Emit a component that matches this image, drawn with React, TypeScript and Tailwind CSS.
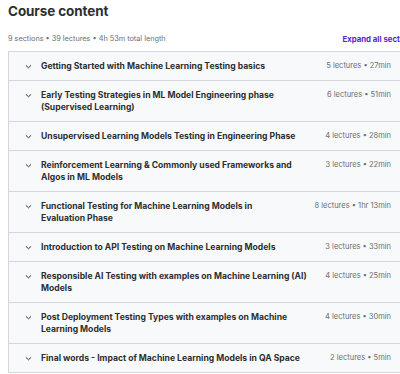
import React from "react";

// titles split where the reference wraps them
const sections = [
  { title: ["Getting Started with Machine Learning Testing basics"], meta: "5 lectures • 27min" },
  { title: ["Early Testing Strategies in ML Model Engineering phase", "(Supervised Learning)"], meta: "6 lectures • 51min" },
  { title: ["Unsupervised Learning Models Testing in Engineering Phase"], meta: "4 lectures • 28min" },
  { title: ["Reinforcement Learning & Commonly used Frameworks and", "Algos in ML Models"], meta: "3 lectures • 22min" },
  { title: ["Functional Testing for Machine Learning Models in", "Evaluation Phase"], meta: "8 lectures • 1hr 13min" },
  { title: ["Introduction to API Testing on Machine Learning Models"], meta: "3 lectures • 33min" },
  { title: ["Responsible AI Testing with examples on Machine Learning (AI)", "Models"], meta: "4 lectures • 25min" },
  { title: ["Post Deployment Testing Types with examples on Machine", "Learning Models"], meta: "4 lectures • 30min" },
  { title: ["Final words - Impact of Machine Learning Models in QA Space"], meta: "2 lectures • 5min" },
];

function Chevron() {
  return (
    <svg width="7" height="7" viewBox="0 0 7 7" className="shrink-0">
      <path d="M1.2 2.6 L3.5 4.8 L5.8 2.6" fill="none" stroke="#2d2f31" strokeWidth="1" strokeLinecap="round" strokeLinejoin="round" />
    </svg>
  );
}

export default function App() {
  return (
    <div className="w-[400px] h-[374px] overflow-hidden bg-white font-['Inter',sans-serif] text-[#2d2f31]">
      <div className="w-[410px] pl-2">
        <h2 className="text-[13.5px] font-bold leading-[16px] pt-[3px] tracking-[-0.1px]">Course content</h2>
        <div className="flex items-center justify-between mt-[15px] h-[11px]">
          <span className="text-[7.3px] text-[#6a6f73]">9 sections • 39 lectures • 4h 53m total length</span>
          <span className="text-[7.8px] font-bold text-[#5624d0] whitespace-nowrap -mr-[6px]">Expand all sections</span>
        </div>
        <div className="mt-[6px] border-l border-t border-[#d1d7dc]">
          {sections.map((s) => (
            <div
              key={s.meta + s.title[0]}
              className="flex items-start bg-[#f7f9fa] border-b border-[#d1d7dc] py-[8px] pl-[16px] pr-[19px]"
            >
              <div className="h-[12px] flex items-center">
                <Chevron />
              </div>
              <div className="ml-[9px] flex-1 min-w-0 text-[8.6px] font-bold leading-[12px]">
                {s.title.map((line) => (
                  <div key={line} className="whitespace-nowrap">{line}</div>
                ))}
              </div>
              <div className="ml-[8px] text-[7.5px] leading-[12px] text-[#6a6f73] whitespace-nowrap">{s.meta}</div>
            </div>
          ))}
        </div>
      </div>
    </div>
  );
}
